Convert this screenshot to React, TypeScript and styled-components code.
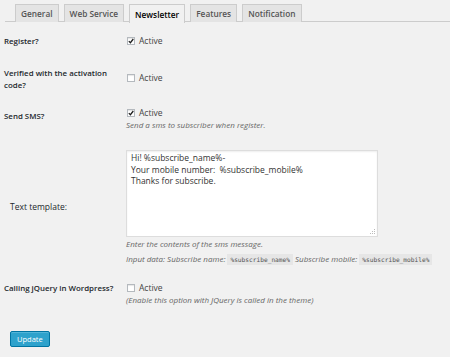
import React from 'react';
import styled, {createGlobalStyle} from 'styled-components';

const GlobalStyle = createGlobalStyle`
    html, body {
        margin: 0;
        padding: 0;
        background: #f1f1f1;
    }
    body {
        font-family: "Open Sans", "Noto Sans", sans-serif;
        color: #444;
        font-size: 8.5px;
    }
`;

const Page = styled.div`
    width: 450px;
    height: 357px;
    overflow: hidden;
    padding: 3px 0 0 5px;
    box-sizing: border-box;
`;

const TabBar = styled.div`
    display: flex;
    gap: 5px;
    padding-left: 10px;
    height: 19px;
    border-bottom: 1px solid #ccc;
    box-sizing: border-box;
`;

const Tab = styled.div<{ $active?: boolean }>`
    height: ${(p) => (p.$active ? '19px' : '18px')};
    margin-top: 1px;
    padding: 0 5px;
    display: flex;
    align-items: center;
    box-sizing: border-box;
    border: 1px solid #ccc;
    border-bottom: none;
    background: ${(p) => (p.$active ? '#f1f1f1' : '#e4e4e4')};
    color: ${(p) => (p.$active ? '#000' : '#555')};
    font-weight: 600;
    font-size: 8.3px;
`;

const Row = styled.div<{ $height: number }>`
    display: grid;
    grid-template-columns: 122px 1fr;
    height: ${(p) => p.$height}px;
    margin-left: -1px;
`;

const Label = styled.div<{ $top: number; $plain?: boolean }>`
    padding-top: ${(p) => p.$top}px;
    padding-left: ${(p) => (p.$plain ? '6px' : '0')};
    font-weight: ${(p) => (p.$plain ? 400 : 600)};
    font-size: ${(p) => (p.$plain ? '8.5px' : '7.9px')};
    color: #23282d;
    line-height: 12px;
    width: 112px;
`;

const Field = styled.div<{ $top: number }>`
    padding-top: ${(p) => p.$top}px;
    line-height: 12px;
`;

const Check = styled.label`
    display: flex;
    align-items: center;
    gap: 4px;
    height: 12px;
    margin-left: 1px;
    color: #444;
`;

const Box = styled.span`
    width: 8px;
    height: 8px;
    box-sizing: border-box;
    border: 1px solid #b4b9be;
    background: #fff;
    box-shadow: inset 0 1px 1px rgba(0, 0, 0, 0.1);
    display: flex;
    align-items: center;
    justify-content: center;
`;

const Desc = styled.p<{ $gap?: number }>`
    margin: ${(p) => p.$gap ?? 0}px 0 0;
    font-style: italic;
    color: #666;
    font-size: 8px;
    line-height: 12px;
    white-space: nowrap;
`;

const TextArea = styled.div`
    width: 252px;
    height: 87px;
    box-sizing: border-box;
    border: 1px solid #ddd;
    background: #fff;
    box-shadow: inset 0 1px 2px rgba(0, 0, 0, 0.07);
    padding: 1px 4px;
    color: #333;
    line-height: 11.5px;
    position: relative;
    white-space: pre;
    margin-bottom: 1px;
`;

const Grip = styled.svg`
    position: absolute;
    right: 1px;
    bottom: 1px;
`;

const Code = styled.code`
    font-family: "DejaVu Sans Mono", monospace;
    font-style: normal;
    font-size: 6.2px;
    background: #e6e6e6;
    color: #555;
    padding: 2px 3px;
    margin: 0 2px;
`;

const Button = styled.button`
    margin-left: 5px;
    margin-top: 17px;
    height: 16px;
    padding: 0 6px;
    border: 1px solid #0074a2;
    border-radius: 2px;
    background: #2ea2cc;
    color: #fff;
    font-family: inherit;
    font-size: 7.5px;
    box-shadow: inset 0 1px 0 rgba(120, 200, 230, 0.5);
`;

function Checkbox({checked, text}: { checked?: boolean; text: string }) {
    return (
        <Check>
            <Box>
                {checked && (
                    <svg width="6" height="6" viewBox="0 0 6 6">
                        <path d="M0.8 3.1 L2.4 4.7 L5.3 1" stroke="#1e1e1e" strokeWidth="1.3" fill="none"/>
                    </svg>
                )}
            </Box>
            {text}
        </Check>
    );
}

export default function App() {
    return (
        <Page>
            <GlobalStyle/>
            <TabBar>
                <Tab>General</Tab>
                <Tab>Web Service</Tab>
                <Tab $active>Newsletter</Tab>
                <Tab>Features</Tab>
                <Tab>Notification</Tab>
            </TabBar>

            <Row $height={33}>
                <Label $top={13}>Register?</Label>
                <Field $top={13}><Checkbox checked text="Active"/></Field>
            </Row>
            <Row $height={42}>
                <Label $top={12}>Verified with the activation code?</Label>
                <Field $top={17}><Checkbox text="Active"/></Field>
            </Row>
            <Row $height={44}>
                <Label $top={13}>Send SMS?</Label>
                <Field $top={10}>
                    <Checkbox checked text="Active"/>
                    <Desc>Send a sms to subscriber when register.</Desc>
                </Field>
            </Row>
            <Row $height={128}>
                <Label $top={60} $plain>Text template:</Label>
                <Field $top={9}>
                    <TextArea>
                        {'Hi! %subscribe_name%-\nYour mobile number:  %subscribe_mobile%\nThanks for subscribe.'}
                        <Grip width="6" height="6" viewBox="0 0 6 6">
                            <rect x="4" y="0" width="1" height="1" fill="#bbb"/>
                            <rect x="2" y="2" width="1" height="1" fill="#bbb"/>
                            <rect x="4" y="2" width="1" height="1" fill="#bbb"/>
                            <rect x="0" y="4" width="1" height="1" fill="#bbb"/>
                            <rect x="2" y="4" width="1" height="1" fill="#bbb"/>
                            <rect x="4" y="4" width="1" height="1" fill="#bbb"/>
                        </Grip>
                    </TextArea>
                    <Desc>Enter the contents of the sms message.</Desc>
                    <Desc $gap={3}>
                        Input data: Subscribe name:<Code>%subscribe_name%</Code>Subscribe mobile:<Code>%subscribe_mobile%</Code>
                    </Desc>
                </Field>
            </Row>
            <Row $height={45}>
                <Label $top={13}>Calling jQuery in Wordpress?</Label>
                <Field $top={13}>
                    <Checkbox text="Active"/>
                    <Desc>(Enable this option with JQuery is called in the theme)</Desc>
                </Field>
            </Row>
            <Button>Update</Button>
        </Page>
    );
}
